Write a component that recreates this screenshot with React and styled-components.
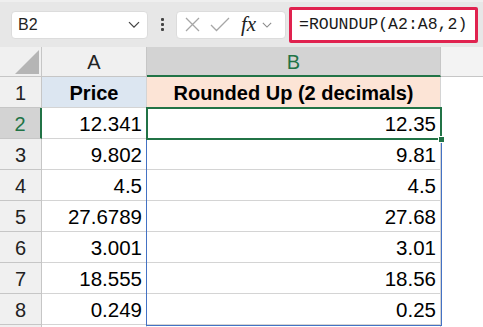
import React from "react";
import styled, { createGlobalStyle, css } from "styled-components";

const GlobalStyle = createGlobalStyle`
  html, body {
    margin: 0;
    padding: 0;
    background: #ffffff;
    overflow: hidden;
  }
  * {
    box-sizing: border-box;
  }
`;

const green = "#217346";
const blue = "#4472c4";
const grid = "#d4d4d4";
const headerLine = "#c6c6c6";

const rows = [
  ["12.341", "12.35"],
  ["9.802", "9.81"],
  ["4.5", "4.5"],
  ["27.6789", "27.68"],
  ["3.001", "3.01"],
  ["18.555", "18.56"],
  ["0.249", "0.25"],
];

const App = () => {
  return (
    <>
      <GlobalStyle />
      <Sheet>
        <TopBar>
          <NameBox>
            <span>B2</span>
            <Chevron size={12} />
          </NameBox>
          <Dots>
            <i />
            <i />
            <i />
          </Dots>
          <Controls>
            <svg width="15" height="15" viewBox="0 0 15 15">
              <path d="M1 1 L14 14 M14 1 L1 14" stroke="#a6a6a6" strokeWidth="1.3" fill="none" />
            </svg>
            <svg width="20" height="15" viewBox="0 0 20 15">
              <path d="M1 8 L6.5 13.5 L19 1" stroke="#a6a6a6" strokeWidth="1.3" fill="none" />
            </svg>
            <Fx>fx</Fx>
            <Chevron size={10} color="#8a8a8a" />
          </Controls>
          <FormulaBar>=ROUNDUP(A2:A8,2)</FormulaBar>
        </TopBar>

        <Grid>
          <Corner>
            <svg width="24" height="24" viewBox="0 0 24 24">
              <path d="M24 0 L24 24 L0 24 Z" fill="#b5b5b5" />
            </svg>
          </Corner>
          <ColHead>A</ColHead>
          <ColHead $active>B</ColHead>
          <ColHead $blank />

          <RowHead>1</RowHead>
          <TitleCell $fill="#dce6f1">Price</TitleCell>
          <TitleCell $fill="#fce4d6">Rounded Up (2 decimals)</TitleCell>
          <EmptyCell />

          {rows.map(([a, b], i) => (
            <React.Fragment key={i}>
              <RowHead $active={i === 0}>{i + 2}</RowHead>
              <Cell>{a}</Cell>
              <Cell>{b}</Cell>
              <EmptyCell />
            </React.Fragment>
          ))}

          <RowHead $stub />
          <Cell $stub />
          <Cell $stub />
          <EmptyCell />

          <RangeOutline />
          <Selection>
            <Handle />
          </Selection>
        </Grid>
      </Sheet>
    </>
  );
};

export default App;

const Chevron = ({ size = 12, color = "#444" }) => (
  <svg width={size} height={size * 0.6} viewBox="0 0 12 7">
    <path d="M1 1 L6 6 L11 1" stroke={color} strokeWidth="1.3" fill="none" />
  </svg>
);

const Sheet = styled.div`
  width: 483px;
  height: 327px;
  overflow: hidden;
  font-family: "Liberation Sans", Arial, sans-serif;
  color: #000;
`;

const TopBar = styled.div`
  height: 47px;
  background: #e7e7e7;
  border-top: 2px solid #efefef;
  display: flex;
  align-items: center;
  padding-left: 11px;
`;

const NameBox = styled.div`
  width: 137px;
  height: 28px;
  background: #fff;
  border-radius: 4px;
  border: 1px solid #dcdcdc;
  display: flex;
  align-items: center;
  justify-content: space-between;
  padding: 0 7px 0 6px;
  font-size: 16px;
  color: #222;
`;

const Dots = styled.div`
  width: 28px;
  display: flex;
  flex-direction: column;
  align-items: center;
  gap: 2px;
  i {
    width: 3px;
    height: 3px;
    background: #444;
    border-radius: 1px;
  }
`;

const Controls = styled.div`
  width: 110px;
  height: 28px;
  background: #fff;
  border-radius: 4px;
  border: 1px solid #dcdcdc;
  display: flex;
  align-items: center;
  gap: 10px;
  padding-left: 8px;
`;

const Fx = styled.span`
  font-family: "Liberation Serif", "Times New Roman", serif;
  font-style: italic;
  font-size: 21px;
  color: #222;
  margin-left: 1px;
  margin-right: -4px;
  line-height: 1;
`;

const FormulaBar = styled.div`
  margin-left: 3px;
  width: 189px;
  height: 36px;
  background: #fff;
  border: 3px solid #e0224f;
  border-radius: 2px;
  display: flex;
  align-items: center;
  padding-left: 7px;
  font-family: "Liberation Mono", "Courier New", monospace;
  font-size: 16.5px;
  color: #1a1a1a;
`;

const Grid = styled.div`
  position: relative;
  display: grid;
  grid-template-columns: 42px 105px 294px 42px;
  grid-template-rows: 30px repeat(8, 31px) 10px;
`;

const headBase = css`
  background: #f0f0f0;
  display: flex;
  align-items: center;
  justify-content: center;
  font-size: 20px;
  color: #222;
`;

const Corner = styled.div`
  ${headBase};
  border-right: 1px solid ${headerLine};
  border-bottom: 1px solid ${headerLine};
  justify-content: flex-end;
  align-items: flex-end;
  padding: 0 2px 2px 0;
`;

const ColHead = styled.div`
  ${headBase};
  border-right: 1px solid ${headerLine};
  border-bottom: 1px solid ${headerLine};
  padding-top: 2px;
  ${(p) =>
    p.$active &&
    css`
      background: #d3d3d3;
      color: ${green};
      border-bottom: 2px solid ${green};
    `}
  ${(p) =>
    p.$blank &&
    css`
      background: #f3f3f3;
      border-right: none;
    `}
`;

const RowHead = styled.div`
  ${headBase};
  border-right: 1px solid ${headerLine};
  border-bottom: 1px solid ${headerLine};
  padding-top: 2px;
  ${(p) =>
    p.$active &&
    css`
      background: #d3d3d3;
      color: ${green};
      border-right: 2px solid ${green};
    `}
  ${(p) =>
    p.$stub &&
    css`
      border-bottom: none;
    `}
`;

const Cell = styled.div`
  border-right: 1px solid ${grid};
  border-bottom: 1px solid ${grid};
  display: flex;
  align-items: center;
  justify-content: flex-end;
  padding: 2px 4px 0 0;
  font-size: 20.5px;
  ${(p) =>
    p.$stub &&
    css`
      border-bottom: none;
    `}
`;

const TitleCell = styled.div`
  background: ${(p) => p.$fill};
  border-right: 1px solid ${grid};
  border-bottom: 1px solid ${grid};
  display: flex;
  align-items: center;
  justify-content: center;
  padding-top: 2px;
  font-size: 20px;
  font-weight: 700;
`;

const EmptyCell = styled.div`
  background: #fff;
`;

const RangeOutline = styled.div`
  position: absolute;
  left: 146px;
  top: 61px;
  width: 296px;
  height: 218px;
  border: 1px solid ${blue};
  pointer-events: none;
`;

const Selection = styled.div`
  position: absolute;
  left: 146px;
  top: 60px;
  width: 296px;
  height: 33px;
  border: 2px solid ${green};
  pointer-events: none;
`;

const Handle = styled.div`
  position: absolute;
  right: -5px;
  bottom: -5px;
  width: 7px;
  height: 7px;
  background: ${green};
  border: 1px solid #fff;
`;
